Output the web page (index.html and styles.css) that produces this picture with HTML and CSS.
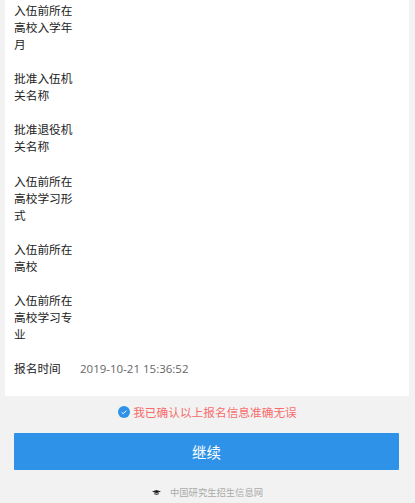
FILE: index.html
```html
<!DOCTYPE html>
<html lang="zh-CN">
<head>
  <meta charset="UTF-8">
  <meta name="viewport" content="width=device-width, initial-scale=1.0">
  <title>中国研究生招生信息网</title>
  <link rel="stylesheet" href="styles.css">
</head>
<body>
  <div class="card">
    <div class="row"><span class="label">入伍前所在高校入学年月</span><span class="value"></span></div>
    <div class="row"><span class="label">批准入伍机关名称</span><span class="value"></span></div>
    <div class="row"><span class="label">批准退役机关名称</span><span class="value"></span></div>
    <div class="row"><span class="label">入伍前所在高校学习形式</span><span class="value"></span></div>
    <div class="row"><span class="label">入伍前所在高校</span><span class="value"></span></div>
    <div class="row"><span class="label">入伍前所在高校学习专业</span><span class="value"></span></div>
    <div class="row"><span class="label">报名时间</span><span class="value">2019-10-21 15:36:52</span></div>
  </div>

  <div class="confirm">
    <svg class="check" viewBox="0 0 12 12" width="12" height="12">
      <circle cx="6" cy="6" r="6" fill="#2d92e8"/>
      <path d="M3.6 6.3 5.2 7.7 8.4 4.7" fill="none" stroke="#fff" stroke-width="1"/>
    </svg>
    <span>我已确认以上报名信息准确无误</span>
  </div>

  <button class="next" type="button">继续</button>

  <div class="footer">
    <svg class="cap" viewBox="0 0 9 5" width="9" height="5">
      <path d="M0 1.6 4.5 0 9 1.6 4.5 3.2Z" fill="#222"/>
      <path d="M2.2 3V4.2L4.5 5 6.8 4.2V3L4.5 3.8Z" fill="#444"/>
    </svg>
    <span>中国研究生招生信息网</span>
  </div>
</body>
</html>
```

FILE: styles.css
```css
html, body {
  margin: 0;
  padding: 0;
}

body {
  background-color: #f2f2f2;
  font-family: "Open Sans", "Noto Sans CJK SC", sans-serif;
  font-size: 11.7px;
  line-height: 17px;
  color: #222;
}

.card {
  background-color: #fff;
  margin: 0 6px 0 5px;
  padding: 2px 9px 18.8px;
}

.row {
  display: flex;
  margin-bottom: 17.2px;
}

.row:last-child {
  margin-bottom: 0;
}

.label {
  width: 59px;
  flex-shrink: 0;
}

.value {
  margin-left: 7px;
  font-size: 11.5px;
  color: #666;
}

.confirm {
  display: flex;
  justify-content: center;
  align-items: center;
  gap: 3px;
  margin-top: 8px;
  color: #f76c6c;
}

.check {
  flex-shrink: 0;
}

.next {
  display: block;
  width: 385px;
  height: 37px;
  margin: 12px 0 0 14px;
  padding: 0;
  border: 0;
  border-radius: 1px;
  background-color: #2d92e8;
  color: #fff;
  font-family: inherit;
  font-size: 14.4px;
}

.footer {
  display: flex;
  justify-content: center;
  align-items: center;
  gap: 9px;
  margin-top: 14px;
  color: #aaa;
  font-size: 9.3px;
}
```
